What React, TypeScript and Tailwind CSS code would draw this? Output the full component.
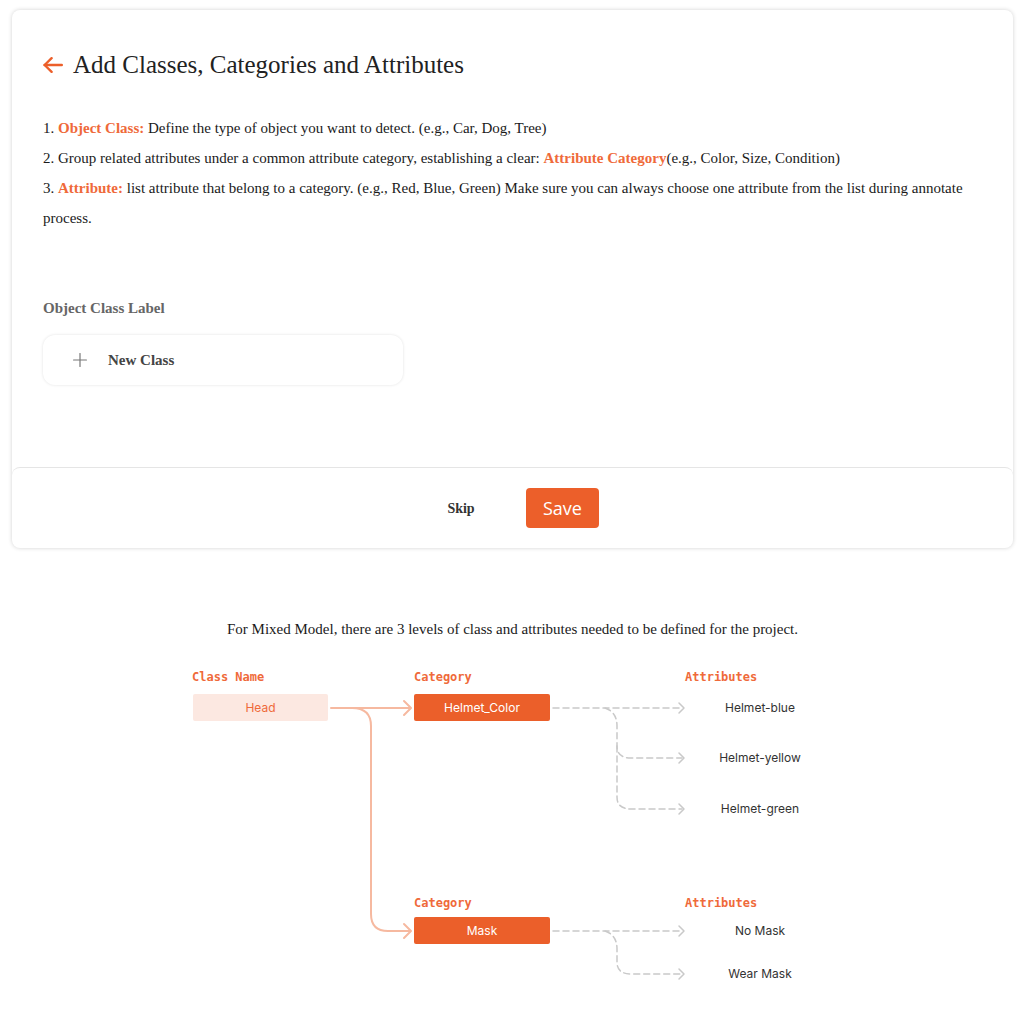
import React from "react";
import { Plus } from "lucide-react";

const serif = "font-['Liberation_Serif','Times_New_Roman',serif]";
const mono = "font-['DejaVu_Sans_Mono',monospace]";
const sans = "font-['Inter','Roboto',sans-serif]";

const Label = ({ text, left, top }: { text: string; left: string; top: string }) => (
	<div className={`absolute ${left} ${top} ${mono} text-[12px] font-bold leading-4 text-[#ef6a3a]`}>{text}</div>
);

const Attr = ({ text, top }: { text: string; top: string }) => (
	<div className={`absolute left-[520px] w-[120px] ${top} ${sans} text-[12px] leading-4 text-center text-[#333]`}>{text}</div>
);

const BackArrow = () => (
	<svg width="20" height="16" viewBox="0 0 20 16" fill="none" stroke="#ec5f2a" strokeWidth="2.4" strokeLinecap="round" strokeLinejoin="round">
		<path d="M18.8 8H1.6" />
		<path d="M8.6 1.2L1.6 8l7 6.8" />
	</svg>
);

const Diagram = () => (
	<div className="relative w-[665px] h-[330px] mx-auto mt-[21px]">
		<svg className="absolute inset-0" width="665" height="330" fill="none">
			<g stroke="#f6b9a0" strokeWidth="2" strokeLinecap="round" strokeLinejoin="round">
				<path d="M151 48 H230" />
				<path d="M224 41 L231 48 L224 55" />
				<path d="M172 48 Q191 48 191 66 V254 Q191 271 208 271 H230" />
				<path d="M224 264 L231 271 L224 278" />
			</g>
			<g stroke="#c9c9c9" strokeWidth="1.5" strokeDasharray="6 4" strokeLinecap="round">
				<path d="M373 48 H502" />
				<path d="M425 48 Q437 52 437 66 V86 Q437 98 451 98 H502" />
				<path d="M437 86 V137 Q437 149 451 149 H502" />
				<path d="M373 271 H502" />
				<path d="M425 271 Q437 275 437 289 V302 Q437 314 451 314 H502" />
			</g>
			<g stroke="#c9c9c9" strokeWidth="1.5" strokeLinecap="round" strokeLinejoin="round">
				<path d="M499 43 L504 48 L499 53" />
				<path d="M499 93 L504 98 L499 103" />
				<path d="M499 144 L504 149 L499 154" />
				<path d="M499 266 L504 271 L499 276" />
				<path d="M499 309 L504 314 L499 319" />
			</g>
		</svg>

		<Label text="Class Name" left="left-[12px]" top="top-[9px]" />
		<Label text="Category" left="left-[234px]" top="top-[9px]" />
		<Label text="Attributes" left="left-[505px]" top="top-[9px]" />
		<Label text="Category" left="left-[234px]" top="top-[235px]" />
		<Label text="Attributes" left="left-[505px]" top="top-[235px]" />

		<div className={`absolute left-[13px] top-[34px] w-[135px] h-[27px] rounded-[2px] bg-[#fce8e1] flex items-center justify-center ${sans} text-[12px] text-[#ef6a3a]`}>Head</div>
		<div className={`absolute left-[234px] top-[34px] w-[136px] h-[27px] rounded-[2px] bg-[#eb5f2a] flex items-center justify-center ${sans} text-[12px] text-white`}>Helmet_Color</div>
		<div className={`absolute left-[234px] top-[257px] w-[136px] h-[27px] rounded-[2px] bg-[#eb5f2a] flex items-center justify-center ${sans} text-[12px] text-white`}>Mask</div>

		<Attr text="Helmet-blue" top="top-[40px]" />
		<Attr text="Helmet-yellow" top="top-[90px]" />
		<Attr text="Helmet-green" top="top-[141px]" />
		<Attr text="No Mask" top="top-[263px]" />
		<Attr text="Wear Mask" top="top-[306px]" />
	</div>
);

export default function App() {
	return (
		<div className={`w-full min-h-screen bg-white pt-[10px] px-[12px] ${serif}`}>
			<div className="w-[1001px] rounded-lg bg-white shadow-[0_0_4px_rgba(0,0,0,0.18)]">
				<div className="px-[31px] pt-[39px] pb-[82px]">
					<div className="flex items-center gap-[10px] h-[32px]">
						<BackArrow />
						<h1 className="text-[25px] leading-8 text-[#222]">Add Classes, Categories and Attributes</h1>
					</div>
					<div className="mt-[32px] text-[15px] leading-[30px] text-[#1a1a1a]">
						<p>
							1. <span className="font-bold text-[#ef6a3a]">Object Class:</span> Define the type of object you want to detect. (e.g., Car, Dog, Tree)
						</p>
						<p>
							2. Group related attributes under a common attribute category, establishing a clear: <span className="font-bold text-[#ef6a3a]">Attribute Category</span>(e.g., Color, Size, Condition)
						</p>
						<p>
							3. <span className="font-bold text-[#ef6a3a]">Attribute:</span> list attribute that belong to a category. (e.g., Red, Blue, Green) Make sure you can always choose one attribute from the list during annotate process.
						</p>
					</div>
					<div className="mt-[65px] text-[15px] leading-[21px] font-bold text-[#666]">Object Class Label</div>
					<div className="mt-[16px] w-[360px] h-[50px] rounded-xl bg-white shadow-[0_0_3px_rgba(0,0,0,0.12)] flex items-center pl-[26px]">
						<Plus size={22} strokeWidth={1.3} className="text-[#777]" />
						<span className="ml-[17px] text-[15px] font-bold text-[#444]">New Class</span>
					</div>
				</div>
				<div className="h-[81px] rounded-t-lg border-t border-[#e5e5e5] flex items-center justify-center gap-[25px] pr-[5px]">
					<button className="w-[80px] text-[14px] font-bold text-[#333]">Skip</button>
					<button className={`w-[73px] h-[40px] rounded-[4px] bg-[#ec5f2a] text-white text-[18px] font-['Open_Sans',sans-serif]`}>Save</button>
				</div>
			</div>

			<p className="mt-[71px] text-center text-[15px] leading-5 text-[#1a1a1a]">
				For Mixed Model, there are 3 levels of class and attributes needed to be defined for the project.
			</p>
			<Diagram />
		</div>
	);
}
